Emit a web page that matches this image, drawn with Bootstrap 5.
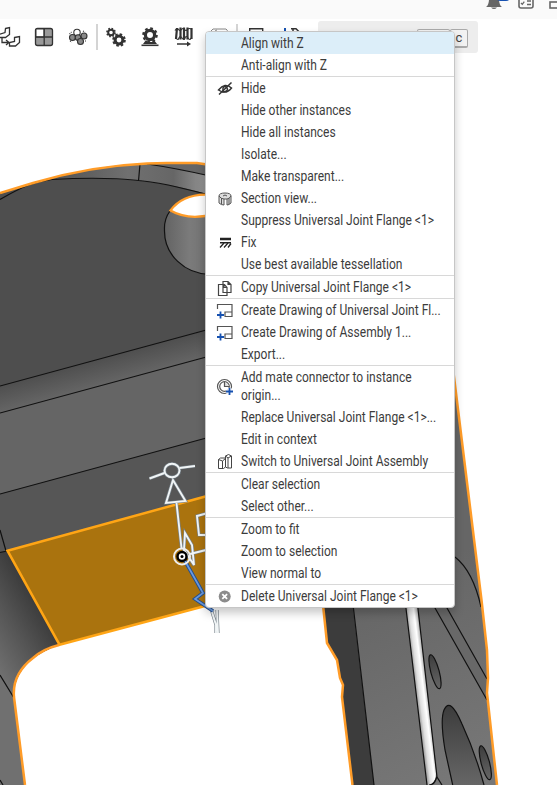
<!DOCTYPE html>
<html lang="en">
<head>
<meta charset="utf-8">
<title>Assembly context menu</title>
<link href="https://cdn.jsdelivr.net/npm/bootstrap@5.3.0/dist/css/bootstrap.min.css" rel="stylesheet">
<style>
body{width:557px;height:785px;overflow:hidden;background:#fff;font-family:Roboto,"Liberation Sans",sans-serif;color:#3c3c3c}
.topbar{height:19px;background:#fafafa}
.topbar svg,.tools svg,.scene{display:block}
.tools{height:41px}
.shortcut-box{width:160px;height:32px;background:#ededed;border-radius:3px;margin:2px 79px 0 0;padding:8px 10px 0 0}
.keycap{height:19px;border:1px solid #aaa;border-bottom-width:2px;border-radius:2px;font-size:13px;line-height:16px;background:#f2f2f2;color:#444}
.k1{width:33px}.k2{width:18px}
.ctx{left:205px;top:31px;width:250px;height:577px;border:1px solid #c6c6c6;border-radius:4px;background:#fff;box-shadow:0 5px 10px rgba(0,0,0,.22);overflow:hidden}
.ctx-item{height:22px;font-size:14px;line-height:18px;padding:2px 0 0 9.500px;white-space:nowrap}
.ctx-item.two-line{height:40px}
.ctx-item.active-row{background:#dceef9}
.ico{width:18px;height:18px;flex:none;margin:1px 7.500px 0 0}
.two-line .ico{margin-top:10px}
.ico svg{display:block;width:18px;height:18px}
.lbl{transform:scaleX(.858);transform-origin:0 0}
.ctx-group + .ctx-group{border-top:1px solid #d8d8d8}
</style>
<script src="https://cdn.jsdelivr.net/npm/bootstrap@5.3.0/dist/js/bootstrap.bundle.min.js"></script>
</head>
<body class="position-relative">
<header class="topbar">
<svg width="557" height="19" fill="none">
<path d="M486 7q3-2 3-8h10q0 6 3 8h-16z M491 7.500h6q-3 3-6 0" fill="#666"/><path d="M497 0h12q-1 1-3 1h-6z" fill="#1651b0"/>
<path d="M519 -4V6q0 2 2 2h10q2 0 2-2V-4" stroke="#666" stroke-width="1.600"/><path d="M521 3l1.300 1.300 2-2.600M527 1h4M527 4.500h4" stroke="#666" stroke-width="1.300"/>
<rect x="550" y="2" width="9" height="6" stroke="#666" stroke-width="1.600"/></svg>
</header>
<nav class="tools d-flex justify-content-between">
<svg width="310" height="41" viewBox="0 19 310 41" fill="none" stroke="#333">
<g stroke-width="1.300"><path d="M5.500 28.500l4-1v7l-4 3H-1v-3l6-2z M14.500 37.500l5-1v6l-4 3.500h-6v-3.500l5-1z" fill="#fff"/><path d="M2 38v4.500h6M6 40l3 2.500-3 2.500"/></g>
<g><rect x="35.500" y="28.500" width="17" height="17" rx="2" fill="#999" stroke-width="1.300"/><path d="M36 29h8v8h-8z" fill="#fff"/><path d="M44.200 28v18M35 37h18" stroke-width="1.300"/></g>
<g fill="#888" stroke-width="1.100"><circle cx="77" cy="32.500" r="3.200" fill="#fff"/><circle cx="72.500" cy="37.500" r="3"/><circle cx="78" cy="37.500" r="2.800"/><circle cx="84" cy="36" r="3"/><circle cx="80.500" cy="41.500" r="3"/><path d="M69.500 34l2-2M83 31l2 1M70 41l2 1M85 41h2" stroke-dasharray="1 1"/></g>
<path d="M97 24v26M237 24v26" stroke="#d4d4d4" stroke-width="2"/>
<g><circle cx="111" cy="32.500" r="2.800" stroke-width="2"/><circle cx="111" cy="32.500" r="4" stroke-width="1.700" stroke-dasharray="1.600 1.540"/><circle cx="119" cy="40" r="3.900" stroke-width="3"/><circle cx="119" cy="40" r="5.800" stroke-width="2" stroke-dasharray="2.500 2.050"/></g>
<g><circle cx="150" cy="35" r="4.600" stroke-width="3.200"/><circle cx="150" cy="35" r="6.700" stroke-width="2.200" stroke-dasharray="2.700 2.560"/><path d="M141.500 45.300h17" stroke-width="1.600"/><path d="M143 44l3-4 2 2h4l2-2 3 4z" fill="#333" stroke="none"/></g>
<g><path d="M177 28l-1 11M180.500 27.500v12M184 27.500v12M187.500 27.500v12M191.500 28v11" stroke-width="2.200"/><path d="M175 30.500q2-3 3.500-1t3 0t3 0t3 0t4.500 0M176 38q2 3 3 0t3 0t3 0t3 0t3 0" stroke-width="1.200"/><path d="M177 44h12" stroke-width="1.500"/><path d="M187 41.500l4 2.500-4 2.500z" fill="#333" stroke="none"/></g>
<path d="M210 32l3-3h13q2 1 1 3M215 32q0-2 2-2" stroke="#888"/><path d="M249.700 34v-5.300h13V34" stroke-width="1.400"/><path d="M285 28v6" stroke="#1651b0" stroke-width="2"/><path d="M291 28.700h5l3 3M293 29v3" stroke-width="1.500"/>
</svg>
<div class="shortcut-box d-flex justify-content-end"><div class="keycap k1"></div><div class="keycap k2 text-center">c</div></div>
</nav>
<main>
<svg class="scene" width="557" height="725" viewBox="0 60 557 725" fill="none">
<defs>
<linearGradient id="rim"><stop offset="0" stop-color="#484848"/><stop offset=".55" stop-color="#707070"/><stop offset=".8" stop-color="#666"/><stop offset="1" stop-color="#999"/></linearGradient>
<linearGradient id="bore"><stop offset="0" stop-color="#636363"/><stop offset=".55" stop-color="#7b7b7b"/><stop offset="1" stop-color="#707070"/></linearGradient>
<linearGradient id="fillet" gradientUnits="userSpaceOnUse" x1="100" y1="358" x2="107" y2="384"><stop stop-color="#4e4e4e"/><stop offset="1" stop-color="#656565"/></linearGradient>
<linearGradient id="side" gradientUnits="userSpaceOnUse" x1="-15" y1="650" x2="48" y2="612"><stop stop-color="#707070"/><stop offset=".5" stop-color="#555"/><stop offset="1" stop-color="#383838"/></linearGradient>
<linearGradient id="arm" gradientUnits="userSpaceOnUse" x1="360" y1="600" x2="450" y2="785"><stop stop-color="#666"/><stop offset="1" stop-color="#777"/></linearGradient>
<linearGradient id="rod" gradientUnits="userSpaceOnUse" x1="414" y1="690" x2="430" y2="688"><stop stop-color="#777"/><stop offset=".3" stop-color="#ddd"/><stop offset=".6" stop-color="#fff"/><stop offset=".85" stop-color="#aaa"/><stop offset="1" stop-color="#666"/></linearGradient>
<linearGradient id="hole" x1="0" y1="0" x2="0" y2="1"><stop stop-color="#3c3c3c"/><stop offset="1" stop-color="#666"/></linearGradient>
</defs>
<!-- flange body -->
<path d="M0 193L33 183Q90 166 147 163.500L167 163H197L230 166V600L59 645Q22 658 15 685L14 697L25 785H0z" fill="#4e4e4e"/>
<path d="M28 185Q90 165 147 163.500L167 163H197L210 165V195Q160 179 87 178Q55 178 28 185z" fill="url(#rim)"/>
<path d="M147 164L167 163H210V176Q178 168 147 164z" fill="#666"/>
<path d="M170 211Q164 219 164.500 230C164 255 185 274 210 274.500V200z" fill="url(#bore)"/>
<path d="M0 386L210 329V357L0 413z" fill="url(#fillet)"/><path d="M0 413L210 356V438L0 494z" fill="#656565"/><path d="M0 494L210 437V500L7 551H0z" fill="#565656"/>
<path d="M0 552L7 551L59 645Q22 658 15 685L14 697L0 675z" fill="url(#side)"/>
<path d="M0 675L14 699L25 785H0z" fill="#707070"/>
<g stroke="#111" stroke-width="1.200"><path d="M0 199.500Q18 189 30 184.500Q40 181 52 179.500Q130 175 177 187L210 195M140 164L138.500 181M147 164Q175 168 210 176M170 211Q164 219 164.500 230C164 255 185 274 210 274.500M0 386L210 329M0 413L210 356M0 494L210 437M0 530L6 551M0 552.500L7 551M0 675L14 698M0 780L3 785"/></g>
<path d="M170.500 210.500Q182 195 205 194.700H215V216H205Q185 219 170.500 210.500z" fill="#fff" stroke="#ff9c28" stroke-width="2.300"/>
<path d="M0 193L33 183Q90 166 147 163.500L167 163H197L210 165" stroke="#ff9c28" stroke-width="2.500"/>
<path d="M7.500 550.700L220 492.500V602L59.500 644.700z" fill="#aa730e" stroke="#ffa515" stroke-width="2.500"/>
<path d="M59 645Q43 649 33 658Q12 674 14 697L25 785" stroke="#ff9c28" stroke-width="2.500"/>
<!-- right arm -->
<path d="M450 340L481.500 600L487 650L488 678L487 693L497 785H352L342 697L343 685L340 678L337 660L327 643L323 600V570H450z" fill="url(#arm)"/>
<path d="M323 600H352L374 785H352L342 697L343 685L340 678L337 660L327 643z" fill="#3c3c3c"/>
<path d="M405 600H417L436 770Q437 781 430 785H427z" fill="url(#rod)"/>
<path d="M435 608L487 700V679L447 608z" fill="#686868"/>
<g stroke="#111" stroke-width="1.200">
<path d="M352.500 600L374 785M405 600L427 785M417 600L437 777L442 785M437 776Q435 785 429 785M430.500 600L487 700M442.500 600L487 679M455 557Q473 571 481 607"/>
<ellipse cx="435" cy="671.700" rx="4.200" ry="17.500" transform="rotate(-15 435 671.700)" fill="url(#hole)"/>
<path d="M452.700 785L445 750Q440 720 444 710Q450 696 462 724Q475 752 484 785" fill="url(#hole)"/>
<ellipse cx="485.300" cy="762.700" rx="4.200" ry="17.500" transform="rotate(-15 485.300 762.700)" fill="url(#hole)"/></g>
<path d="M450 345L455 385L481.500 600L487 650L488 678L487 693L497 785M322.500 600L327 643L337 660L340 678L343 685L342 697L352.500 785" stroke="#ff9c28" stroke-width="2.500"/>
<!-- mate connector triad -->
<g id="triad"><g stroke="#77828a" stroke-width="3.200"><path d="M149.500 478.500L164.500 473M179.500 468L195 466M173 480L166 503L185.500 501zM176.500 503L181.500 548M185 533L192 545L194 565L184 550zM190 554L210 549M206 513.500L197 516L199 535H206M213 610L212 612L216 625V633M217 610L218 633"/><ellipse cx="172" cy="470.500" rx="7.500" ry="6.700"/></g>
<g stroke="#f1f5f6" stroke-width="1.900"><path d="M149.500 478.500L164.500 473M179.500 468L195 466M173 480L166 503L185.500 501zM176.500 503L181.500 548M185 533L192 545L194 565L184 550zM190 554L210 549M206 513.500L197 516L199 535H206M213 610L212 612L216 625V633M217 610L218 633"/><ellipse cx="172" cy="470.500" rx="7.500" ry="6.700"/></g></g>
<path d="M185 561L203 593L195 599L213 611" stroke="#234f91" stroke-width="3.600"/><path d="M185 561L203 593L195 599L213 611" stroke="#6b9bdf" stroke-width="1.700"/>
<circle cx="182" cy="556.500" r="8" stroke="#eee" stroke-width="2"/><circle cx="182" cy="556.500" r="4.500" fill="#fff" stroke="#000" stroke-width="2.500"/><circle cx="182" cy="556.500" r="1.500" fill="#000"/>
</svg>
</main>
<div class="ctx position-absolute">
<div class="ctx-group"><div class="ctx-item d-flex active-row"><span class="ico"></span><span class="lbl">Align with Z</span></div><div class="ctx-item d-flex"><span class="ico"></span><span class="lbl">Anti-align with Z</span></div></div>
<div class="ctx-group">
<div class="ctx-item d-flex"><span class="ico"><svg fill="none" stroke="#333" stroke-width="1.500"><path d="M2.500 10Q9 2 15.500 8Q10 15 2.500 10zM3 14.500L15.500 2.500"/><path d="M7 8q2-3 4 0t-4 4z"/></svg></span><span class="lbl">Hide</span></div>
<div class="ctx-item d-flex"><span class="ico"></span><span class="lbl">Hide other instances</span></div>
<div class="ctx-item d-flex"><span class="ico"></span><span class="lbl">Hide all instances</span></div>
<div class="ctx-item d-flex"><span class="ico"></span><span class="lbl">Isolate...</span></div>
<div class="ctx-item d-flex"><span class="ico"></span><span class="lbl">Make transparent...</span></div>
<div class="ctx-item d-flex"><span class="ico"><svg fill="#ddd" stroke="#555"><path d="M3 6Q3 3 9 3t6 3v7q-2 2-4 2V9H8v6q-3 0-5-2z"/><path d="M3 6q2 3 5 3M15 6q-2 3-4 3M5.500 8v6M13 8v6M7 6q2-2 4 0" fill="none"/></svg></span><span class="lbl">Section view...</span></div>
<div class="ctx-item d-flex"><span class="ico"></span><span class="lbl">Suppress Universal Joint Flange &lt;1&gt;</span></div>
<div class="ctx-item d-flex"><span class="ico"><svg fill="none" stroke="#222"><path d="M4 5h11" stroke-width="2.400"/><path d="M4 8.700h11" stroke-width="1.400"/><path d="M4 13.500l4-4.500M8 13.500l4-4.500M12 13.500l3-4" stroke-width="1.300"/></svg></span><span class="lbl">Fix</span></div>
<div class="ctx-item d-flex"><span class="ico"></span><span class="lbl">Use best available tessellation</span></div></div>
<div class="ctx-group"><div class="ctx-item d-flex"><span class="ico"><svg fill="#fff" stroke="#444" stroke-width="1.200"><path d="M7 2.500h5l3 3v8H7zM2.500 5.500h6l2.500 3v8H2.500zM8 5.500v3h3M12 2.500v3h3"/></svg></span><span class="lbl">Copy Universal Joint Flange &lt;1&gt;</span></div></div>
<div class="ctx-group">
<div class="ctx-item d-flex"><span class="ico"><svg fill="none" stroke="#555" stroke-width="1.200"><path d="M1.500 7V2.500h14.500v12H8.500M9 14.500v-4.500h7"/><path d="M1 13h7M4.500 9.500v7" stroke="#1651b0" stroke-width="1.800"/></svg></span><span class="lbl">Create Drawing of Universal Joint Fl...</span></div>
<div class="ctx-item d-flex"><span class="ico"><svg fill="none" stroke="#555" stroke-width="1.200"><path d="M1.500 7V2.500h14.500v12H8.500M9 14.500v-4.500h7"/><path d="M1 13h7M4.500 9.500v7" stroke="#1651b0" stroke-width="1.800"/></svg></span><span class="lbl">Create Drawing of Assembly 1...</span></div>
<div class="ctx-item d-flex"><span class="ico"></span><span class="lbl">Export...</span></div></div>
<div class="ctx-group">
<div class="ctx-item two-line d-flex"><span class="ico"><svg fill="none" stroke="#555" stroke-width="1.200"><circle cx="8.500" cy="8.500" r="7"/><circle cx="8.500" cy="8.500" r="4.800"/><path d="M8.500 3.500v5h5" fill="#ddd"/><path d="M10 13.500h7M13.500 10v7" stroke="#fff" stroke-width="4"/><path d="M10 13.500h7M13.500 10v7" stroke="#1651b0" stroke-width="1.800"/></svg></span><span class="lbl">Add mate connector to instance<br>origin...</span></div>
<div class="ctx-item d-flex"><span class="ico"></span><span class="lbl">Replace Universal Joint Flange &lt;1&gt;...</span></div>
<div class="ctx-item d-flex"><span class="ico"></span><span class="lbl">Edit in context</span></div>
<div class="ctx-item d-flex"><span class="ico"><svg fill="#fff" stroke="#444"><path d="M2.500 6.500l2-1.500h5v9l-2 1.500h-5zM2.500 6.500L6.500 8v7M6.500 8l3-2.500M9.500 3l3-1.500 3 1.500v12h-4l-2-1zM9.500 3l2.500 2v10M12 5l3.500-2"/></svg></span><span class="lbl">Switch to Universal Joint Assembly</span></div></div>
<div class="ctx-group"><div class="ctx-item d-flex"><span class="ico"></span><span class="lbl">Clear selection</span></div><div class="ctx-item d-flex"><span class="ico"></span><span class="lbl">Select other...</span></div></div>
<div class="ctx-group"><div class="ctx-item d-flex"><span class="ico"></span><span class="lbl">Zoom to fit</span></div><div class="ctx-item d-flex"><span class="ico"></span><span class="lbl">Zoom to selection</span></div><div class="ctx-item d-flex"><span class="ico"></span><span class="lbl">View normal to</span></div></div>
<div class="ctx-group"><div class="ctx-item d-flex"><span class="ico"><svg><circle cx="8.700" cy="8.500" r="6" fill="#8c8c8c"/><path d="M6.300 6.100l4.800 4.800M11.100 6.100l-4.800 4.800" stroke="#fff" stroke-width="1.800"/></svg></span><span class="lbl">Delete Universal Joint Flange &lt;1&gt;</span></div></div>
</div>
</body>
</html>
